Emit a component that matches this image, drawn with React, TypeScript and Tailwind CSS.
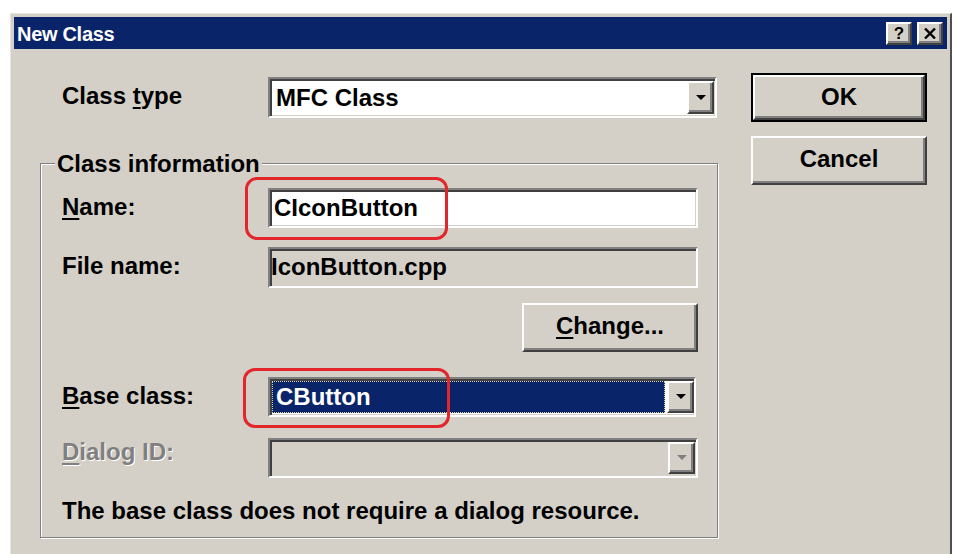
import React from "react";

const raised =
  "border-t-2 border-l-2 border-t-white border-l-white border-b-2 border-r-2 border-b-[#404040] border-r-[#404040] shadow-[inset_-2px_-2px_0_#808080] bg-[#d4d0c8]";

const sunkenOuter =
  "border-2 border-t-[#808080] border-l-[#808080] border-b-white border-r-white";
const sunkenInner = "shadow-[inset_2px_2px_0_#404040,inset_-1px_-1px_0_#d4d0c8]";

function U({ children }: { children: React.ReactNode }) {
  return <span className="underline decoration-2 underline-offset-[3px]">{children}</span>;
}

function Arrow({ disabled }: { disabled?: boolean }) {
  return (
    <svg width="10" height="6" viewBox="0 0 10 6">
      <polygon points="0,0 10,0 5,5" fill={disabled ? "#808080" : "#000"} />
    </svg>
  );
}

function DropBtn({ disabled }: { disabled?: boolean }) {
  return (
    <div className={`w-[27px] flex items-center justify-center ${raised}`}>
      <Arrow disabled={disabled} />
    </div>
  );
}

function Label({ children, w = "w-[206px]", mt = "mt-[5px]", grey }: { children: React.ReactNode; w?: string; mt?: string; grey?: boolean }) {
  return (
    <div
      className={`${w} ${mt} shrink-0 h-[28px] leading-[28px] text-[24px] font-bold whitespace-nowrap ${
        grey ? "text-[#808080] [text-shadow:1px_1px_0_#fff]" : "text-black"
      }`}
    >
      {children}
    </div>
  );
}

export default function App() {
  return (
    <div className="w-[954px] h-[554px] bg-white overflow-hidden font-['Liberation_Sans',Arial,sans-serif] text-black">
      <div className="ml-[10px] mt-[13px] w-[942px] h-[541px] bg-[#d4d0c8] border-t border-l border-t-[#e6e4de] border-l-[#e6e4de] border-r-2 border-r-[#505050] pt-[3px] pl-[3px] pr-[3px] flex flex-col">
        {/* Title bar */}
        <div className="h-[32px] bg-[#0a246a] flex items-center pl-[3px] pr-[4px]">
          <div className="text-white font-bold text-[20px] leading-[24px] tracking-[-0.3px] flex-1 mt-[1px]">New Class</div>
          <div className={`w-[26px] h-[23px] mt-[1px] flex items-center justify-center ${raised}`}>
            <span className="font-bold text-[17px] leading-none text-black -mt-[1px]">?</span>
          </div>
          <div className={`w-[26px] h-[23px] mt-[1px] ml-[5px] flex items-center justify-center ${raised}`}>
            <svg width="12" height="11" viewBox="0 0 12 11">
              <path d="M1 0.5 L11 10.5 M11 0.5 L1 10.5" stroke="#000" strokeWidth="2.4" />
            </svg>
          </div>
        </div>

        {/* Body */}
        <div className="flex flex-1">
          {/* Left part */}
          <div className="w-[737px] shrink-0">
            {/* Class type */}
            <div className="flex items-start mt-[28px] pl-[48px]">
              <Label>
                Class <U>t</U>ype
              </Label>
              <div className={`w-[449px] h-[41px] ${sunkenOuter} bg-white`}>
                <div className={`h-full flex ${sunkenInner} pl-[6px] pr-[1px] py-[2px]`}>
                  <div className="flex-1 text-[24px] font-bold leading-[33px] pl-[0px]">MFC Class</div>
                  <DropBtn />
                </div>
              </div>
            </div>

            {/* Group box */}
            <div className="relative ml-[26px] mt-[45px] w-[678px] h-[375px] border border-[#808080] shadow-[inset_1px_1px_0_#fff,1px_1px_0_#fff]">
              <div className="absolute left-[14px] -top-[14px] px-[2px] bg-[#d4d0c8] text-[24px] font-bold leading-[28px] whitespace-nowrap">
                Class information
              </div>

              {/* Name */}
              <div className="flex items-start mt-[24px] pl-[21px]">
                <Label>
                  <U>N</U>ame:
                </Label>
                <div className={`w-[430px] h-[40px] ${sunkenOuter} bg-white`}>
                  <div className={`h-full ${sunkenInner} pl-[4px] text-[24px] font-bold leading-[35px]`}>CIconButton</div>
                </div>
              </div>

              {/* File name */}
              <div className="flex items-start mt-[19px] pl-[21px]">
                <Label>File name:</Label>
                <div className={`w-[430px] h-[41px] ${sunkenOuter} bg-[#d4d0c8]`}>
                  <div className={`h-full ${sunkenInner} pl-[1px] text-[24px] font-bold leading-[36px]`}>IconButton.cpp</div>
                </div>
              </div>

              {/* Change */}
              <div className="flex justify-end mt-[15px] pr-[19px]">
                <div className={`w-[176px] h-[49px] flex items-center justify-center text-[24px] font-bold ${raised}`}>
                  <span className="-mt-[3px]">
                    <U>C</U>hange...
                  </span>
                </div>
              </div>

              {/* Base class */}
              <div className="flex items-start mt-[25px] pl-[21px]">
                <Label>
                  <U>B</U>ase class:
                </Label>
                <div className={`w-[428px] h-[40px] ${sunkenOuter} bg-white`}>
                  <div className={`h-full flex ${sunkenInner} pl-[2px] pr-[0px] py-[2px]`}>
                    <div className="flex-1 mr-[2px] bg-[#0a246a] border border-dotted border-[#d8d0a0] text-white text-[24px] font-bold leading-[29px] pl-[3px]">
                      CButton
                    </div>
                    <DropBtn />
                  </div>
                </div>
              </div>

              {/* Dialog ID */}
              <div className="flex items-start mt-[21px] pl-[21px]">
                <Label mt="mt-0" grey>
                  <U>D</U>ialog ID:
                </Label>
                <div className={`w-[430px] h-[40px] ${sunkenOuter} bg-[#d4d0c8]`}>
                  <div className={`h-full flex justify-end ${sunkenInner} pr-[1px] py-[2px]`}>
                    <DropBtn disabled />
                  </div>
                </div>
              </div>

              {/* Info text */}
              <div className="mt-[19px] pl-[21px] text-[24px] font-bold leading-[28px] whitespace-nowrap">
                The base class does not require a dialog resource.
              </div>

              {/* Red annotations */}
              <div className="absolute left-[204px] top-[13px] w-[203px] h-[63px] border-[3px] border-[#e3262b] rounded-[12px]" />
              <div className="absolute left-[202px] top-[204px] w-[207px] h-[60px] border-[3px] border-[#e3262b] rounded-[12px]" />
            </div>
          </div>

          {/* Right buttons */}
          <div className="w-[176px] shrink-0 pt-[24px] flex flex-col">
            <div className="h-[49px] border-2 border-[#000]">
              <div className={`h-full flex items-center justify-center text-[24px] font-bold ${raised}`}>
                <span className="-mt-[2px]">OK</span>
              </div>
            </div>
            <div className={`mt-[14px] h-[49px] flex items-center justify-center text-[24px] font-bold ${raised}`}>
              <span className="-mt-[3px]">Cancel</span>
            </div>
          </div>
        </div>
      </div>
    </div>
  );
}
